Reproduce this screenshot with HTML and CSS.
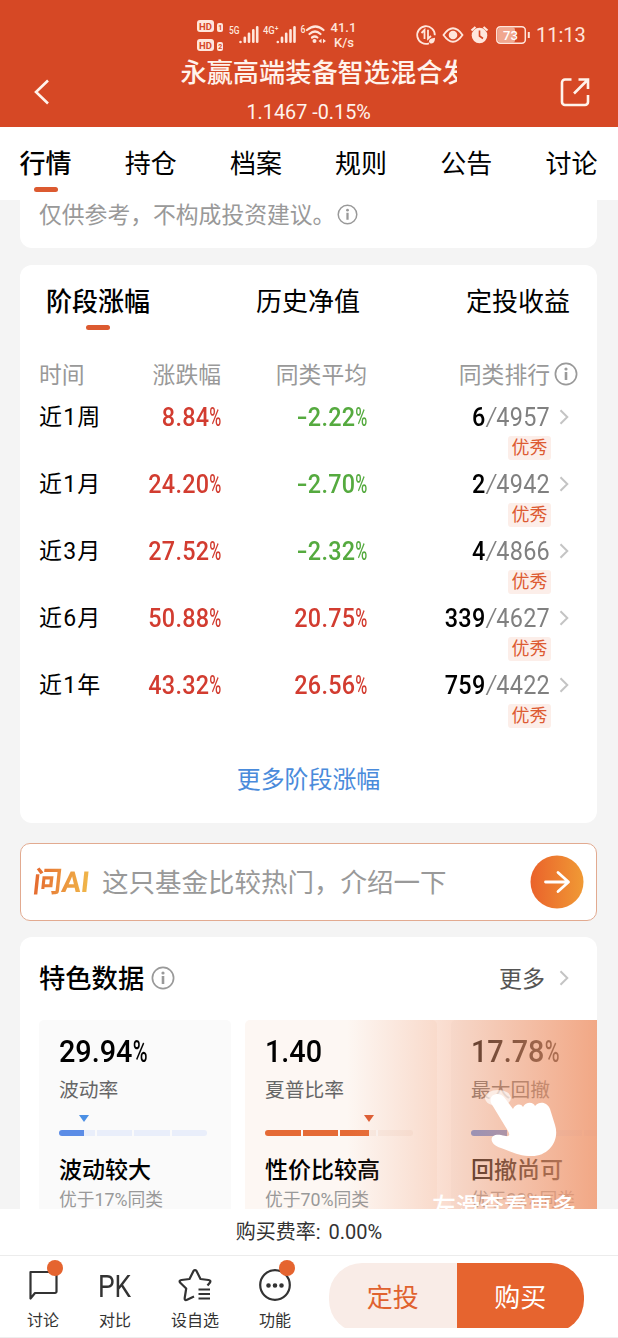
FILE: index.html
```html
<!DOCTYPE html>
<html lang="zh-CN">

<head>
    <meta charset="UTF-8">
    <meta name="viewport" content="width=device-width, initial-scale=1.0">
    <title>永赢高端装备智选混合</title>
    <link rel="stylesheet" href="styles.css">
</head>

<body>
    <svg class="sprite">
        <symbol id="info" viewBox="0 0 24 24">
            <circle cx="12" cy="12" r="10.6" fill="none" stroke="currentColor" stroke-width="1.7" />
            <circle cx="12" cy="7" r="1.6" fill="currentColor" />
            <path d="M12 10v8" stroke="currentColor" stroke-width="2.6" />
        </symbol>
        <symbol id="arrow" viewBox="0 0 10 16">
            <path d="M1.5 1.2 8.3 8l-6.8 6.8" fill="none" stroke="#c4c4c4" stroke-width="2" />
        </symbol>
    </svg>

    <header class="header">
        <svg class="status" viewBox="0 0 618 52" fill="none" stroke="#ffe6dc">
            <g fill="#ffe6dc" stroke="none">
                <rect x="197" y="20" width="17" height="12" rx="3" />
                <rect x="197" y="39" width="17" height="12" rx="3" />
                <rect x="217" y="23" width="6" height="9" rx="2" />
                <rect x="217" y="42" width="6" height="9" rx="2" />
                <g class="hd">
                    <text x="199" y="29.7">HD</text>
                    <text x="199" y="48.7">HD</text>
                    <text x="218.2" y="30.2" class="sim">1</text>
                    <text x="218.2" y="49.2" class="sim">2</text>
                </g>
                <g class="net">
                    <text x="229" y="33.5" textLength="10.5" lengthAdjust="spacingAndGlyphs">5G</text>
                    <text x="263" y="33.5" textLength="15.5" lengthAdjust="spacingAndGlyphs">4G⁺</text>
                    <text x="300.5" y="32.5" textLength="5" lengthAdjust="spacingAndGlyphs">6</text>
                </g>
                <text x="330.5" y="32" class="speed">41.1</text>
                <text x="334" y="47" class="speed">K/s</text>
                <text x="536" y="42" class="clock">11:13</text>
            </g>
            <path stroke-width="2.6" stroke-linecap="round" d="M240.5 42v0M244.8 41.7v-4M249 41.7v-8M253.3 41.7v-11.5M257.2 41.7v-14.5M277.8 42v0M282 41.7v-4M286.2 41.7v-8M290.5 41.7v-11.5M294.5 41.7v-14.5" />
            <path stroke-width="2.2" stroke-linecap="round" d="M307 30q8.5-7 16.5 0M309.500 34q5.500-5 11 0M312 37.500q2.800-2 5.400 0" />
            <circle cx="314.5" cy="41" r="2" fill="#ffe6dc" stroke="none" />
            <path d="M318.500 41l3-2.200v4.400zM326 41l-3-2.200v4.400z" fill="#ffe6dc" stroke="none" />
            <g stroke-width="1.8">
                <path d="M429 43.300a8.800 8.800 0 1 1 5.800-8" />
                <path d="M421.500 33l3-3v9M431 36l-3 2.700v-9" />
                <path d="M429 42c0-3.500 3-3.500 6-4.200 0 4-1.500 6.500-5 5.400z" fill="#ffe6dc" stroke="none" />
                <path d="M443.500 35q9.500-13.500 19 0q-9.500 13.500-19 0z" />
            </g>
            <circle cx="453" cy="35" r="4.300" fill="#ffe6dc" stroke="none" />
            <circle cx="479.500" cy="35.500" r="7.800" fill="#ffe6dc" stroke="none" />
            <path stroke-width="2.200" d="M471.500 30.500l4-3.500M487.500 30.500l-4-3.500" />
            <path stroke="#d64825" stroke-width="1.600" d="M479.500 30.500v5.500l3.500 2.500" />
            <rect x="498" y="27.500" width="17" height="15" rx="2" fill="#f0a78f" stroke="none" />
            <rect x="496.800" y="26.800" width="28.500" height="16.500" rx="3.500" stroke-width="1.500" />
            <path stroke-width="2" d="M528.800 32v6" />
            <text x="503" y="40" class="battery">73</text>
        </svg>
        <div class="nav">
            <svg class="back" viewBox="0 0 16 26"><path d="M14 1.500 2 13l12 11.500" /></svg>
            <div class="fund">
                <h1>永赢高端装备智选混合发</h1>
                <p>1.1467 -0.15%</p>
            </div>
            <svg class="share" viewBox="0 0 30 30">
                <path d="M11.500 2.500H5a3 3 0 0 0-3 3V25a3 3 0 0 0 3 3h20a3 3 0 0 0 3-3v-7M14 16.500 27 3.500M18.500 2.500H28V12" />
            </svg>
        </div>
    </header>

    <nav class="tabs">
        <a class="active">行情</a>
        <a>持仓</a>
        <a>档案</a>
        <a>规则</a>
        <a>公告</a>
        <a>讨论</a>
    </nav>

    <main class="content">
        <section class="card note">仅供参考，不构成投资建议。<svg><use href="#info" /></svg></section>

        <section class="card stage">
            <div class="subtabs">
                <a class="active">阶段涨幅</a>
                <a>历史净值</a>
                <a>定投收益</a>
            </div>
            <div class="row head">
                <span>时间</span>
                <span>涨跌幅</span>
                <span>同类平均</span>
                <span>同类排行</span>
                <svg class="info"><use href="#info" /></svg>
            </div>
            <div class="row">
                <span class="term">近1周</span>
                <b class="num up">8.84<i>%</i></b>
                <b class="num down"><u>-</u>2.22<i>%</i></b>
                <span class="num rank"><b>6</b><u>/</u>4957</span>
                <svg class="arrow"><use href="#arrow" /></svg>
                <em>优秀</em>
            </div>
            <div class="row">
                <span class="term">近1月</span>
                <b class="num up">24.20<i>%</i></b>
                <b class="num down"><u>-</u>2.70<i>%</i></b>
                <span class="num rank"><b>2</b><u>/</u>4942</span>
                <svg class="arrow"><use href="#arrow" /></svg>
                <em>优秀</em>
            </div>
            <div class="row">
                <span class="term">近3月</span>
                <b class="num up">27.52<i>%</i></b>
                <b class="num down"><u>-</u>2.32<i>%</i></b>
                <span class="num rank"><b>4</b><u>/</u>4866</span>
                <svg class="arrow"><use href="#arrow" /></svg>
                <em>优秀</em>
            </div>
            <div class="row">
                <span class="term">近6月</span>
                <b class="num up">50.88<i>%</i></b>
                <b class="num up">20.75<i>%</i></b>
                <span class="num rank"><b>339</b><u>/</u>4627</span>
                <svg class="arrow"><use href="#arrow" /></svg>
                <em>优秀</em>
            </div>
            <div class="row">
                <span class="term">近1年</span>
                <b class="num up">43.32<i>%</i></b>
                <b class="num up">26.56<i>%</i></b>
                <span class="num rank"><b>759</b><u>/</u>4422</span>
                <svg class="arrow"><use href="#arrow" /></svg>
                <em>优秀</em>
            </div>
            <a class="more-link">更多阶段涨幅</a>
        </section>

        <section class="ask">
            <b class="ask-logo">问AI</b>
            <span>这只基金比较热门，介绍一下</span>
            <svg class="go" viewBox="0 0 54 54">
                <defs>
                    <linearGradient id="orange">
                        <stop offset="0" stop-color="#ea622b" />
                        <stop offset="1" stop-color="#f09a35" />
                    </linearGradient>
                </defs>
                <circle cx="27" cy="27" r="26.500" fill="url(#orange)" />
                <path d="M15.500 27H38M28 17.500 38.500 27 28 36.500" fill="none" stroke="#fff" stroke-width="2.800" stroke-linecap="round" stroke-linejoin="round" />
            </svg>
        </section>

        <section class="card feature">
            <div class="feature-head">
                <h2>特色数据</h2>
                <svg class="info"><use href="#info" /></svg>
                <span>更多</span>
                <svg class="arrow"><use href="#arrow" /></svg>
            </div>
            <div class="boxes">
                <div class="box">
                    <b class="big">29.94<i>%</i></b>
                    <p>波动率</p>
                    <div class="meter blue" style="--v: 25px"><s></s><s></s><s></s><s></s></div>
                    <h3>波动较大</h3>
                    <small>优于17%同类</small>
                </div>
                <div class="box warm">
                    <b class="big">1.40</b>
                    <p>夏普比率</p>
                    <div class="meter red" style="--v: 104px"><s></s><s></s><s></s><s></s></div>
                    <h3>性价比较高</h3>
                    <small>优于70%同类</small>
                </div>
                <div class="box">
                    <b class="big">17.78<i>%</i></b>
                    <p>最大回撤</p>
                    <div class="meter blue" style="--v: 47px"><s></s><s></s><s></s><s></s></div>
                    <h3>回撤尚可</h3>
                    <small>优于32%同类</small>
                </div>
                <div class="guide">
                    <svg viewBox="0 0 76 70">
                        <ellipse cx="14" cy="8" rx="13" ry="8" fill="#fff" opacity=".65" />
                        <path fill="#fff" d="M7 13C4 4 15 1 20 7L29 19C31 14 37 13 39 17C42 11 50 12 51 16C56 10 64 13 66 19L71 35C76 50 65 66 48 66C35 66 28 62 17 58C4 54 5 43 17 45C24 47 27 47 24 41Z" />
                    </svg>
                    <b>左滑查看更多</b>
                </div>
            </div>
        </section>
    </main>

    <footer>
        <div class="fee">购买费率: <span>0.00%</span></div>
        <div class="toolbar">
            <a class="tool dot">
                <svg viewBox="0 0 34 34"><path d="M4.500 4H29a1.500 1.500 0 0 1 1.500 1.500v18A1.500 1.500 0 0 1 29 25H9l-4.500 5.500z" /></svg>
                讨论
            </a>
            <a class="tool">
                <span class="pk">PK</span>
                对比
            </a>
            <a class="tool wide">
                <svg viewBox="0 0 34 34">
                    <path d="M16 28.500 8.500 32Q6.500 32.500 6.700 30L8.200 20.500 2 14.500Q0.800 12.500 3.500 12L11.500 11 15.500 3Q17 1 18.500 3L22.500 11 30.500 12Q33.200 12.500 32 14.500L29.500 17.500M20.500 21.500H32M20.500 26H32M20.500 30.500H32" />
                </svg>
                设自选
            </a>
            <a class="tool dot">
                <svg viewBox="0 0 34 34">
                    <circle cx="17" cy="17" r="14.800" />
                    <path class="dots" d="M10.500 17.500v0M17 17.500v0M23.500 17.500v0" />
                </svg>
                功能
            </a>
            <div class="buttons">
                <button>定投</button>
                <button class="buy">购买</button>
            </div>
        </div>
    </footer>
</body>

</html>
```
FILE: styles.css
```css
* {
    box-sizing: border-box;
    margin: 0;
    padding: 0;
}
body {
    width: 618px;
    height: 1338px;
    display: flex;
    flex-direction: column;
    overflow: hidden;
    background: #f4f4f4;
    color: #000;
    font-family: Roboto, "Noto Sans CJK SC", sans-serif;
}
i, em, u, s {
    font-style: normal;
    text-decoration: none;
}
svg {
    flex: none;
    display: block;
}
.sprite {
    display: none;
}

/* header */
.header {
    height: 127px;
    background: #d64825;
    color: #fff3ec;
}
.status {
    width: 618px;
    height: 52px;
}
.status text {
    stroke: none;
}
.hd {
    fill: #d64825;
    font-size: 9.5px;
    font-weight: 700;
}
.hd .sim {
    font-size: 7px;
}
.net {
    font-size: 11.5px;
    font-weight: 500;
}
.speed {
    font-size: 13px;
    font-weight: 500;
}
.clock {
    font-size: 20px;
}
.battery {
    font-size: 13px;
    font-weight: 500;
    fill: #fff;
}
.nav {
    height: 75px;
    display: flex;
    justify-content: space-between;
    padding: 3px 28px 0 34px;
}
.back {
    width: 16px;
    height: 26px;
    margin-top: 24px;
}
.back path, .share path {
    fill: none;
    stroke: #fff3ec;
    stroke-width: 2.6;
}
.share {
    width: 30px;
    height: 30px;
    margin-top: 22px;
}
.fund {
    width: 276px;
    margin-left: 27px;
}
.fund h1 {
    font-size: 26.2px;
    font-weight: 500;
    line-height: 36px;
    white-space: nowrap;
    overflow: hidden;
}
.fund p {
    padding-left: 66px;
    font-size: 19.8px;
    line-height: 26px;
    margin-top: 9px;
}

.tabs {
    height: 73px;
    display: flex;
    justify-content: space-between;
    padding: 0 20.5px 0 19.5px;
    background: #fff;
    font-size: 26px;
    line-height: 74px;
}
.active {
    position: relative;
    font-weight: 500;
}
.active::after {
    content: "";
    position: absolute;
    left: 50%;
    bottom: 8px;
    width: 24px;
    height: 5px;
    margin-left: -12px;
    border-radius: 3px;
    background: #dc5a30;
}

/* content */
.content {
    height: 1009px;
    padding: 0 21px 0 20px;
    overflow: hidden;
}
.card {
    background: #fff;
    border-radius: 12px;
}
.note {
    display: flex;
    height: 48px;
    padding-left: 19px;
    border-radius: 0 0 12px 12px;
    font-size: 22.8px;
    line-height: 32px;
    color: #999;
}
.note svg {
    width: 21px;
    height: 21px;
    margin: 4px 0 0 2px;
}
.stage {
    height: 558px;
    margin-top: 17px;
}
.subtabs {
    height: 91px;
    display: flex;
    justify-content: space-between;
    padding: 0 27px 0 26px;
    font-size: 26px;
    line-height: 74px;
}
.subtabs a {
    height: 73px;
}
.row {
    height: 67px;
    display: grid;
    grid-template-columns: 90px 92px 146px 183px 28px;
    grid-template-rows: 38px 24px;
    padding-left: 19px;
    font-size: 23px;
    line-height: 38px;
}
.head {
    height: 42px;
    font-size: 22.8px;
    line-height: 39px;
    color: #999;
}
.head span + span {
    text-align: right;
}
.term {
    line-height: 40px;
    letter-spacing: 1.2px;
}
.info {
    width: 24px;
    height: 24px;
    margin: 6px 0 0 4px;
    color: #999;
}
.num {
    font-size: 26px;
    font-weight: 500;
    line-height: 39px;
    letter-spacing: .3px;
    text-align: right;
    transform: scaleX(.9);
    transform-origin: right;
}
.num i, .big i {
    display: inline-block;
    width: 13px;
    font-weight: 500;
    letter-spacing: 0;
    text-align: left;
    transform: scaleX(.7);
    transform-origin: left;
}
.num u {
    display: inline-block;
    width: 12px;
    text-align: left;
    transform: scaleX(1.35);
    transform-origin: left;
}
.up {
    color: #d23c30;
}
.down {
    color: #55aa3f;
}
.rank {
    color: #808080;
    font-weight: 400;
}
.rank b {
    color: #000;
    font-weight: 500;
}
.rank u {
    font-weight: 300;
}
.arrow {
    width: 10px;
    height: 16px;
    margin: 11px 0 0 9px;
}
.row em {
    grid-column: 4;
    justify-self: end;
    width: 43px;
    height: 24px;
    margin-right: -1px;
    border-radius: 3px;
    background: #fceee9;
    color: #dd5b32;
    font-size: 18px;
    line-height: 24px;
    text-align: center;
}
.more-link {
    display: block;
    margin-top: 29px;
    text-align: center;
    font-size: 23.9px;
    line-height: 36px;
    color: #4a8bdb;
}

.ask {
    height: 78px;
    display: flex;
    align-items: center;
    margin-top: 20px;
    padding: 0 12px;
    border: 1px solid #e2aa90;
    border-radius: 10px;
    background: #fff;
    font-size: 26.5px;
    color: #999;
}
.ask span {
    margin-top: -4px;
}
.ask-logo {
    width: 69px;
    font-size: 29px;
    line-height: 40px;
    letter-spacing: -.2px;
    transform: skewX(-6deg);
    background: linear-gradient(90deg, #e5692f, #f0b64a 80%);
    -webkit-background-clip: text;
    background-clip: text;
    color: transparent;
}
.go {
    width: 54px;
    height: 54px;
    margin: -1px 0 0 auto;
}

.feature {
    height: 300px;
    margin-top: 16px;
}
.feature-head {
    height: 83px;
    display: flex;
    align-items: center;
    padding: 0 28px 1px 19px;
}
.feature-head h2 {
    font-size: 26.3px;
    font-weight: 500;
    line-height: 36px;
    margin-top: 2px;
}
.feature-head .info {
    margin: 0 auto 0 7px;
}
.feature-head span {
    margin-top: -2px;
    font-size: 23px;
    color: #555;
}
.feature-head .arrow {
    margin: 0 0 0 14px;
}
.boxes {
    position: relative;
    display: flex;
    gap: 14px;
    padding-left: 19px;
    overflow: hidden;
}
.box {
    flex: none;
    width: 192px;
    height: 230px;
    padding: 9px 20px;
    border-radius: 5px;
    background: #fafafa;
}
.warm {
    background: #fdf7f3;
}
.big {
    display: block;
    font-size: 32px;
    font-weight: 500;
    line-height: 44px;
    transform: scaleX(.9);
    transform-origin: left;
}
.box p {
    font-size: 19.8px;
    line-height: 36px;
    color: #666;
}
.meter {
    position: relative;
    display: flex;
    width: 148px;
    height: 6px;
    margin-top: 21px;
    border-radius: 3px;
    background: linear-gradient(var(--c), var(--c)) no-repeat 0 0 / var(--v) 100% var(--track);
}
.meter s {
    flex: 1;
    border-right: 2px solid #fafafa;
}
.meter s:last-of-type {
    border: 0;
}
.meter::after {
    content: "";
    position: absolute;
    left: calc(var(--v) - 5px);
    top: -15px;
    border: 5px solid transparent;
    border-top: 7px solid var(--mark);
    border-bottom: 0;
}
.blue {
    --c: #5b8ce6;
    --mark: #4b8fe4;
    --track: #e9eefa;
}
.red {
    --c: #e56a35;
    --mark: #dc5a30;
    --track: #f8eee8;
}
.box h3 {
    margin-top: 18px;
    font-size: 23px;
    font-weight: 500;
    line-height: 34px;
}
.box small {
    display: block;
    font-size: 17.8px;
    line-height: 24px;
    color: #999;
}
/* swipe hint over the cards */
.guide {
    position: absolute;
    top: 0;
    right: 0;
    width: 250px;
    height: 230px;
    padding: 70px 0 0 137px;
    background: linear-gradient(90deg, rgba(240, 154, 114, 0), rgba(240, 154, 114, .86));
}
.box:nth-child(3) .meter::after {
    display: none;
}
.guide svg {
    width: 76px;
    height: 70px;
}
.guide b {
    display: block;
    width: 146px;
    margin: 32px 0 0 -52px;
    font-size: 24px;
    font-weight: 500;
    line-height: 30px;
    color: #fff;
    white-space: nowrap;
}

/* footer */
footer {
    height: 129px;
    background: #fff;
    border-bottom: 1px solid #eee;
}
.fee {
    height: 47px;
    border-bottom: 1px solid #ececec;
    font-size: 20px;
    line-height: 46px;
    text-align: center;
    color: #333;
}
.fee span {
    margin-left: 3px;
}
.toolbar {
    display: flex;
    padding: 7px 0 0 7px;
}
.tool {
    position: relative;
    width: 72px;
    display: flex;
    flex-direction: column;
    align-items: center;
    padding-top: 5px;
    font-size: 16px;
    line-height: 25px;
    color: #333;
}
.wide {
    width: 88px;
}
.tool svg {
    width: 34px;
    height: 34px;
    margin-bottom: 6px;
    fill: none;
    stroke: #333;
    stroke-width: 2.2;
    stroke-linejoin: round;
}
.tool .dots {
    stroke-width: 4.6;
    stroke-linecap: round;
}
.pk {
    height: 40px;
    font-size: 31px;
    line-height: 37px;
    transform: scaleX(.85);
}
.dot::after {
    content: "";
    position: absolute;
    left: 40px;
    top: -3px;
    width: 16px;
    height: 16px;
    border-radius: 50%;
    background: #e5642f;
}
.buttons {
    display: flex;
    margin-left: 18px;
    border-radius: 33px;
    overflow: hidden;
}
button {
    width: 127.5px;
    height: 65px;
    border: 0;
    background: #f9ece7;
    color: #e0622f;
    font: inherit;
    font-size: 26px;
}
.buy {
    background: #e6642f;
    color: #fff;
}
```
